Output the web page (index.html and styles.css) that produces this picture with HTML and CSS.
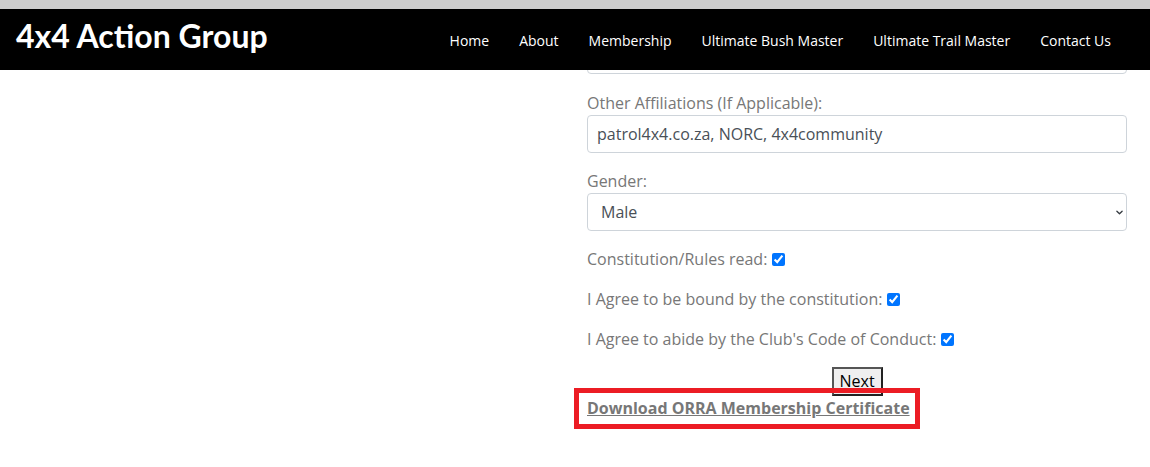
FILE: index.html
```html
<!DOCTYPE html>
<html lang="en">

<head>
    <meta charset="UTF-8">
    <meta name="viewport" content="width=device-width, initial-scale=1.0">
    <title>4x4 Action Group - Membership</title>
    <link rel="stylesheet" href="styles.css">
</head>

<body>

    <div class="topStrip"></div>

    <div class="siteHeader">
        <a class="brand" href="#">4x4 Action Group</a>
        <ul class="mainNav">
            <li><a href="#">Home</a></li>
            <li><a href="#">About</a></li>
            <li><a href="#">Membership</a></li>
            <li><a href="#">Ultimate Bush Master</a></li>
            <li><a href="#">Ultimate Trail Master</a></li>
            <li><a href="#">Contact Us</a></li>
        </ul>
    </div>

    <div class="pageRow">
        <div class="leftCol"></div>

        <form class="memberForm" onsubmit="return false;">

            <div class="formGroup">
                <input type="text" class="formControl" value="">
            </div>

            <div class="formGroup tightGroup">
                <label for="affiliations">Other Affiliations (If Applicable):</label>
                <input type="text" id="affiliations" class="formControl" value="patrol4x4.co.za, NORC, 4x4community">
            </div>

            <div class="formGroup tightGroup">
                <label for="gender">Gender:</label>
                <div class="selectWrap">
                    <select id="gender" class="formControl">
                        <option selected>Male</option>
                        <option>Female</option>
                    </select>
                    <svg class="chevron" width="9" height="7" viewBox="0 0 16 16">
                        <path d="M2 5l6 6 6-6" fill="none" stroke="#343a40" stroke-width="3" stroke-linecap="round" stroke-linejoin="round" />
                    </svg>
                </div>
            </div>

            <div class="checkRow">
                <label for="rulesRead">Constitution/Rules read:</label>
                <input type="checkbox" id="rulesRead" checked>
            </div>

            <div class="checkRow">
                <label for="bound">I Agree to be bound by the constitution:</label>
                <input type="checkbox" id="bound" checked>
            </div>

            <div class="checkRow">
                <label for="conduct">I Agree to abide by the Club's Code of Conduct:</label>
                <input type="checkbox" id="conduct" checked>
            </div>

            <div class="btnRow">
                <button type="button" id="nextBtn">Next</button>
            </div>

            <div class="downloadRow">
                <a href="#" class="downloadLink">Download ORRA Membership Certificate</a>
            </div>

        </form>
    </div>

</body>

</html>
```

FILE: styles.css
```css
body {
    margin: 0;
    font-family: "Open Sans", "Liberation Sans", sans-serif;
    background-color: white;
    min-height: 467px;
}

.topStrip {
    height: 9px;
    background-color: #cdcdcd;
}

/* header sits over the top of the form when scrolled */
.siteHeader {
    position: fixed;
    top: 9px;
    left: 0;
    right: 0;
    z-index: 10;
    height: 61px;
    background-color: black;
    display: flex;
    justify-content: space-between;
    align-items: center;
    padding: 0 24px 0 16px;
}

.brand {
    color: white;
    text-decoration: none;
    font-family: Lato, "Liberation Sans", sans-serif;
    font-weight: bold;
    font-size: 32px;
    margin-top: -8px;
}

.mainNav {
    list-style: none;
    margin: 2px 0 0 0;
    padding: 0;
    display: flex;
}

.mainNav a {
    display: block;
    color: white;
    text-decoration: none;
    font-size: 14px;
    padding: 0 15px;
}

.pageRow {
    display: flex;
    padding: 27px 23px 50px 0;
}

.leftCol {
    flex: 1;
}

.memberForm {
    width: 540px;
    font-size: 16px;
    line-height: 24px;
    color: #777;
}

.formGroup {
    margin-bottom: 17px;
}

.formGroup.tightGroup {
    margin-bottom: 16px;
}

.formGroup label {
    display: block;
}

.formControl {
    display: block;
    box-sizing: border-box;
    width: 100%;
    height: 38px;
    padding: 6px 9px;
    font-family: "Open Sans", "Liberation Sans", sans-serif;
    font-size: 16px;
    color: #495057;
    background-color: white;
    border: 1px solid #ced4da;
    border-radius: 4px;
}

.selectWrap {
    position: relative;
}

select.formControl {
    appearance: none;
    padding-left: 13px;
}

.chevron {
    position: absolute;
    right: 3px;
    top: 16px;
}

.checkRow {
    margin-bottom: 16px;
    display: flex;
    align-items: center;
}

.checkRow input {
    width: 13px;
    height: 13px;
    margin: 0 0 0 5px;
}

.btnRow {
    text-align: center;
}

#nextBtn {
    font-family: "Open Sans", "Liberation Sans", sans-serif;
    font-size: 16px;
    line-height: 21px;
    color: black;
    background-color: #efefef;
    border: 2px solid;
    border-color: #555 #222 #222 #555;
    padding: 2px 6px;
    width: 51px;
    height: 29px;
    vertical-align: top;
}

.downloadRow {
    position: relative;
    width: fit-content;
    white-space: nowrap;
}

.downloadLink {
    color: #777;
    font-weight: bold;
}

/* red highlight box drawn round the link */
.downloadRow::after {
    content: "";
    position: absolute;
    top: -8px;
    left: -13px;
    right: -10px;
    bottom: -9px;
    border: 5px solid #ec1c24;
}
```
